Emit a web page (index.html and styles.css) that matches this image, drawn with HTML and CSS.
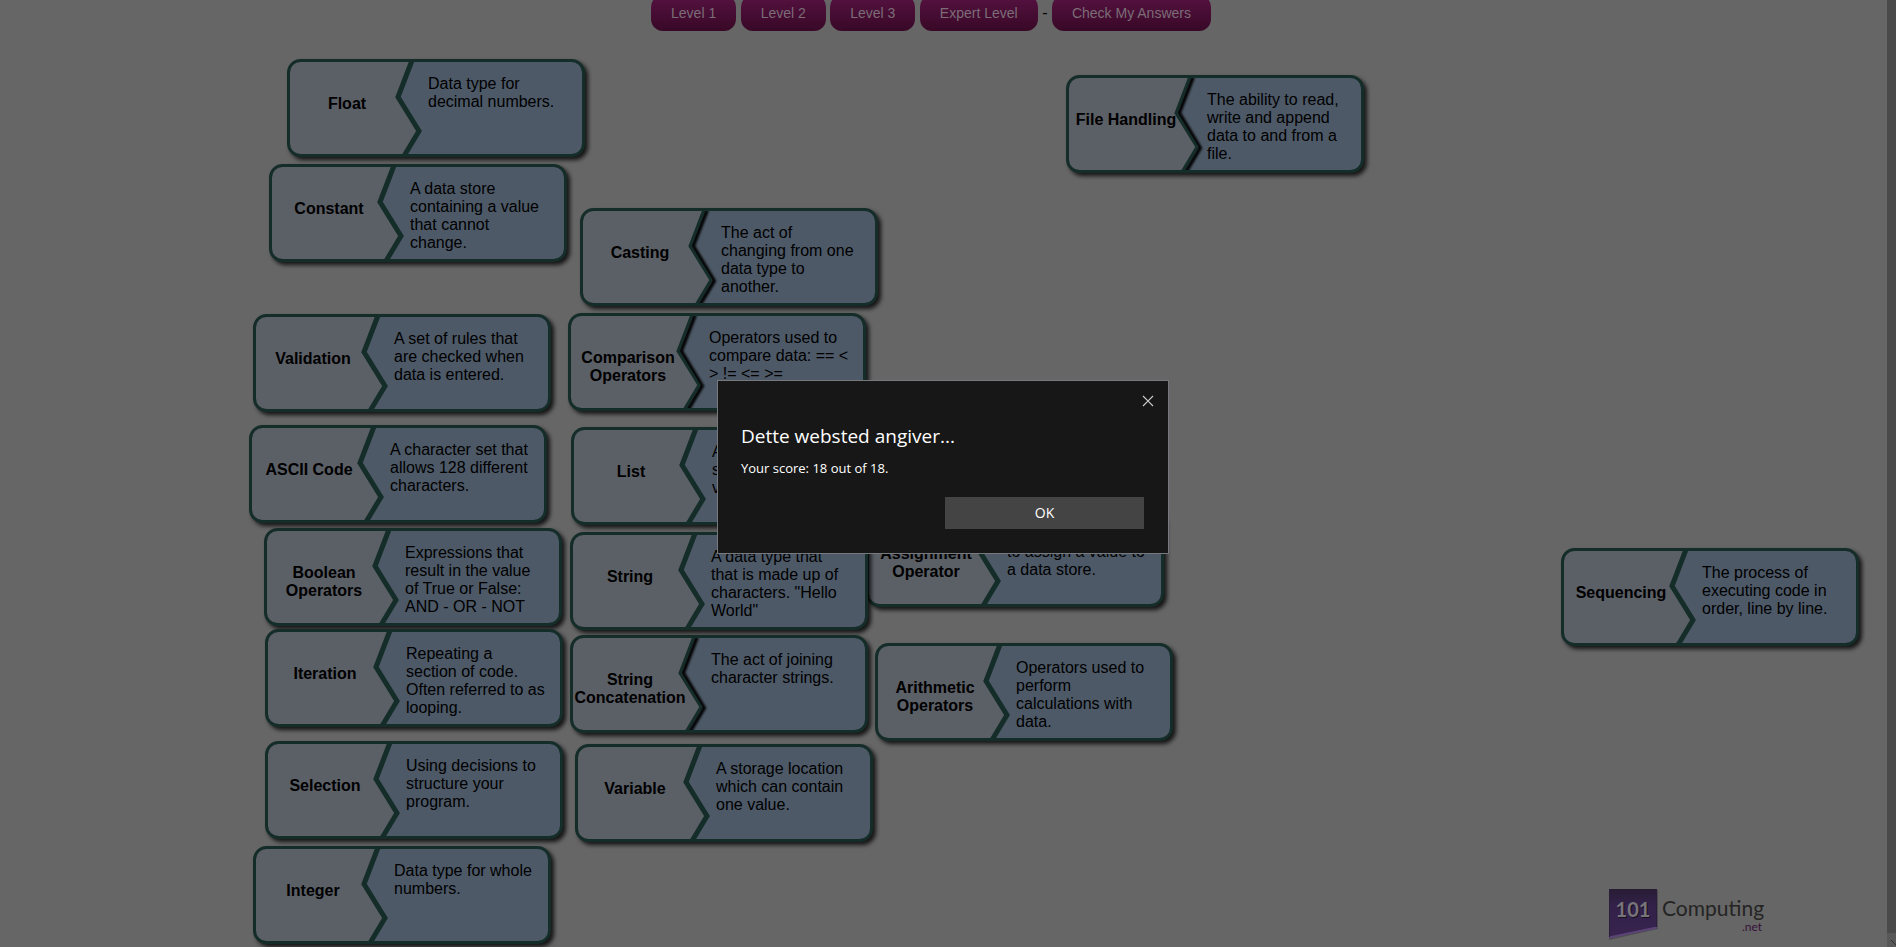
FILE: index.html
```html
<!DOCTYPE html>
<html lang="en">
<head>
<meta charset="utf-8">
<title>Programming Concepts</title>
<link rel="stylesheet" href="styles.css">
</head>
<body>
<svg class="defs" aria-hidden="true">
  <defs>
    <filter id="soft" x="-20%" y="-20%" width="140%" height="140%"><feGaussianBlur stdDeviation="0.8"/></filter>
    <clipPath id="inside"><rect x="1" y="1" width="296" height="96" rx="12"/></clipPath>
    <symbol id="piece" viewBox="0 0 298 98">
      <rect x="1.5" y="1.5" width="295" height="95" rx="12" class="fill-right"/>
      <path d="M125 1.5H13.5a12 12 0 0 0-12 12v71a12 12 0 0 0 12 12H117L132 72L111 38Z" class="fill-left"/>
      <path d="M125 1.5L111 38L132 72L117 97" class="seam"/>
      <rect x="1.5" y="1.5" width="295" height="95" rx="12" class="edge"/>
    </symbol>
    <symbol id="joined" viewBox="0 0 298 98">
      <rect x="1.5" y="1.5" width="295" height="95" rx="12" class="fill-right"/>
      <g clip-path="url(#inside)"><path d="M127 2L113 38L134 73L119 98" class="seam-shadow" filter="url(#soft)"/></g>
      <path d="M124 1.5H13.5a12 12 0 0 0-12 12v71a12 12 0 0 0 12 12H116L131 72L110 38Z" class="fill-left"/>
      <rect x="1.5" y="1.5" width="295" height="95" rx="12" class="edge"/>
      <path d="M124 1.5L110 38L131 72L116 97" class="seam seam-thin"/>
    </symbol>
  </defs>
</svg>

<div class="page">
  <nav class="levels">
    <button type="button">Level 1</button>
    <button type="button">Level 2</button>
    <button type="button">Level 3</button>
    <button type="button">Expert Level</button>
    -
    <button type="button">Check My Answers</button>
  </nav>

  <main class="board">
    <article class="card float"><svg><use href="#piece"/></svg><h2>Float</h2><p>Data type for<br>decimal numbers.</p></article>
    <article class="card constant"><svg><use href="#piece"/></svg><h2>Constant</h2><p>A data store<br>containing a value<br>that cannot<br>change.</p></article>
    <article class="card casting"><svg><use href="#joined"/></svg><h2>Casting</h2><p>The act of<br>changing from one<br>data type to<br>another.</p></article>
    <article class="card file-handling"><svg><use href="#joined"/></svg><h2>File Handling</h2><p>The ability to read,<br>write and append<br>data to and from a<br>file.</p></article>
    <article class="card validation"><svg><use href="#piece"/></svg><h2>Validation</h2><p>A set of rules that<br>are checked when<br>data is entered.</p></article>
    <article class="card comparison"><svg><use href="#joined"/></svg><h2>Comparison<br>Operators</h2><p>Operators used to<br>compare data: == &lt;<br>&gt; != &lt;= &gt;=</p></article>
    <article class="card ascii"><svg><use href="#piece"/></svg><h2>ASCII Code</h2><p>A character set that<br>allows 128 different<br>characters.</p></article>
    <article class="card list"><svg><use href="#piece"/></svg><h2>List</h2><p>A data type that<br>stores multiple<br>values.</p></article>
    <article class="card assignment"><svg><use href="#piece"/></svg><h2>Assignment<br>Operator</h2><p>Operator used<br>to assign a value to<br>a data store.</p></article>
    <article class="card boolean"><svg><use href="#piece"/></svg><h2>Boolean<br>Operators</h2><p>Expressions that<br>result in the value<br>of True or False:<br>AND - OR - NOT</p></article>
    <article class="card string"><svg><use href="#piece"/></svg><h2>String</h2><p>A data type that<br>that is made up of<br>characters. "Hello<br>World"</p></article>
    <article class="card sequencing"><svg><use href="#piece"/></svg><h2>Sequencing</h2><p>The process of<br>executing code in<br>order, line by line.</p></article>
    <article class="card iteration"><svg><use href="#piece"/></svg><h2>Iteration</h2><p>Repeating a<br>section of code.<br>Often referred to as<br>looping.</p></article>
    <article class="card concatenation"><svg><use href="#joined"/></svg><h2>String<br>Concatenation</h2><p>The act of joining<br>character strings.</p></article>
    <article class="card arithmetic"><svg><use href="#piece"/></svg><h2>Arithmetic<br>Operators</h2><p>Operators used to<br>perform<br>calculations with<br>data.</p></article>
    <article class="card selection"><svg><use href="#piece"/></svg><h2>Selection</h2><p>Using decisions to<br>structure your<br>program.</p></article>
    <article class="card variable"><svg><use href="#piece"/></svg><h2>Variable</h2><p>A storage location<br>which can contain<br>one value.</p></article>
    <article class="card integer"><svg><use href="#piece"/></svg><h2>Integer</h2><p>Data type for whole<br>numbers.</p></article>

    <a class="logo" href="#" aria-label="101 Computing .net">
      <svg width="160" height="54" viewBox="0 0 160 54">
        <defs>
          <linearGradient id="flag" x1="0" y1="0" x2="0" y2="1">
            <stop offset="0" stop-color="#281c34"/><stop offset="0.35" stop-color="#33214a"/><stop offset="1" stop-color="#38244e"/>
          </linearGradient>
        </defs>
        <path d="M1 2H50V41L1 52Z" fill="#4e4e50"/>
        <path d="M1 1H49V40L1 50Z" fill="url(#flag)"/>
        <path d="M1 49.5L49 39.5" stroke="#5c4478" stroke-width="2"/>
        <path d="M1.5 1V49M48.5 1V39" stroke="#2b1d3c" stroke-width="1"/>
        <text x="26" y="30" class="logo-num-shadow">101</text>
        <text x="25" y="29" class="logo-num">101</text>
        <text x="54" y="28" class="logo-name">Computing</text>
        <text x="154" y="43" class="logo-net">.net</text>
      </svg>
    </a>
  </main>
</div>

<div class="scrollbar" aria-hidden="true">
  <div class="scroll-end"><svg width="9" height="14" viewBox="0 0 9 14"><path d="M4 7L9 12" stroke="#303030" fill="none"/></svg></div>
</div>

<div class="overlay">
  <section class="dialog" role="dialog" aria-labelledby="dialog-title">
    <button type="button" class="close" aria-label="Close"><svg width="12" height="12" viewBox="0 0 12 12"><path d="M1 1L11 11M11 1L1 11" stroke="#d0d0d0" stroke-width="1.1"/></svg></button>
    <h1 id="dialog-title">Dette websted angiver...</h1>
    <p>Your score: 18 out of 18.</p>
    <button type="button" class="ok">OK</button>
  </section>
</div>
</body>
</html>
```
FILE: styles.css
```css
* { box-sizing: border-box; }

body {
  margin: 0;
  background: #666;
  color: #000;
  font: 16px/18px "Liberation Sans", Arial, sans-serif;
}

.defs { position: absolute; width: 0; height: 0; }

.page {
  display: flex;
  flex-direction: column;
  height: 100vh;
  overflow: hidden;
}

.levels {
  margin-top: -5px;
  padding-right: 34px;
  height: 36px;
  text-align: center;
}

.levels button {
  height: 36px;
  padding: 0 20px;
  border: 0;
  border-radius: 12px;
  background: linear-gradient(#561242, #380826);
  color: #7c6c78;
  font: 14px/16px "Liberation Sans", Arial, sans-serif;
}

.board { position: relative; flex: 1; }

/* Draggable jigsaw cards */
.card {
  position: absolute;
  display: grid;
  grid-template-columns: 120px 140px;
  column-gap: 21px;
  width: 298px;
  height: 98px;
}

.card > svg {
  position: absolute;
  width: 298px;
  height: 98px;
  filter: drop-shadow(3px 3px 2px rgba(0, 0, 0, 0.8));
}

.card h2 {
  position: relative;
  margin: 0;
  padding-top: 36px;
  font-size: 16px;
  line-height: 18px;
  font-weight: bold;
  text-align: center;
  white-space: nowrap;
}

.card p {
  position: relative;
  margin: 0;
  padding-top: 16px;
  white-space: nowrap;
}

.fill-left { fill: #5b5f66; }
.fill-right { fill: #4d5967; }
.edge { fill: none; stroke: #152d29; stroke-width: 3; }
.seam { fill: none; stroke: #152d29; stroke-width: 5; }
.seam-thin { stroke-width: 3; }
.seam-shadow { fill: none; stroke: #000; stroke-width: 4; }

.float { left: 287px; top: 28px; }
.constant { left: 269px; top: 133px; }
.casting { left: 580px; top: 177px; }
.file-handling { left: 1066px; top: 44px; }
.validation { left: 253px; top: 283px; }
.comparison { left: 568px; top: 282px; }
.ascii { left: 249px; top: 394px; }
.list { left: 571px; top: 396px; }
.assignment { left: 866px; top: 478px; }
.boolean { left: 264px; top: 497px; }
.string { left: 570px; top: 501px; }
.sequencing { left: 1561px; top: 517px; }
.iteration { left: 265px; top: 598px; }
.concatenation { left: 570px; top: 604px; }
.arithmetic { left: 875px; top: 612px; }
.selection { left: 265px; top: 710px; }
.variable { left: 575px; top: 713px; }
.integer { left: 253px; top: 815px; }

.logo { position: absolute; right: 128px; bottom: 5px; }
.logo svg { display: block; }
.logo-num, .logo-num-shadow { font: bold 20px Lato, sans-serif; text-anchor: middle; }
.logo-num { fill: #77747a; }
.logo-num-shadow { fill: #17101f; }
.logo-name { font: 21px Lato, sans-serif; fill: #242424; }
.logo-net { font: 12px Lato, sans-serif; fill: #35103a; text-anchor: end; }

.scrollbar {
  position: fixed;
  top: 0;
  right: 0;
  bottom: 0;
  width: 9px;
  display: flex;
  flex-direction: column;
  justify-content: flex-end;
  background: #4a4a4a;
}
.scroll-end { height: 14px; background: #585858; }
.scroll-end svg { display: block; }

/* Browser alert */
.overlay {
  position: fixed;
  inset: 0;
  display: flex;
  align-items: center;
  justify-content: center;
  padding-right: 10px;
  padding-bottom: 13px;
}

.dialog {
  display: flex;
  flex-direction: column;
  width: 452px;
  padding: 14px 24px 24px 23px;
  border: 1px solid #76797d;
  background: #171717;
  color: #fff;
  font-family: "Open Sans", "Noto Sans", sans-serif;
}

.dialog .close {
  align-self: flex-end;
  margin-right: -10px;
  width: 12px;
  height: 12px;
  padding: 0;
  border: 0;
  background: none;
}
.dialog .close svg { display: block; }

.dialog h1 {
  margin: 15px 0 0;
  font-size: 19px;
  line-height: 28px;
  font-weight: normal;
}

.dialog p {
  margin: 8px 0 0;
  font-size: 13px;
  line-height: 20px;
}

.dialog .ok {
  align-self: flex-end;
  margin-top: 19px;
  width: 199px;
  height: 32px;
  padding: 0 0 1px;
  border: 0;
  background: #444;
  color: #fff;
  font: 14px "Open Sans", "Noto Sans", sans-serif;
}
```
